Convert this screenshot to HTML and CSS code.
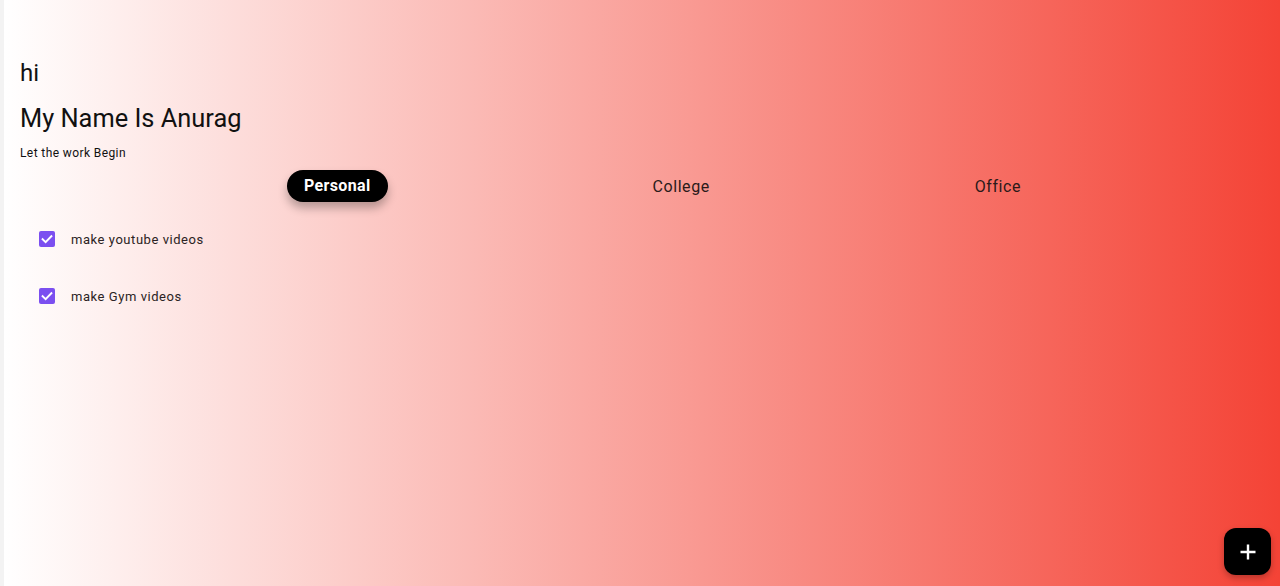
FILE: index.html
```html
<!DOCTYPE html>
<html>
<head>
<meta charset="utf-8">
<link rel="stylesheet" href="styles.css">
</head>
<body>
<div class="frame">
  <main class="screen">
    <header class="intro">
      <div class="hi">hi</div>
      <h1 class="name">My Name Is Anurag</h1>
      <p class="tagline">Let the work Begin</p>
    </header>
    <nav class="tabs">
      <span class="tab active">Personal</span>
      <span class="tab">College</span>
      <span class="tab">Office</span>
    </nav>
    <ul class="todos">
      <li class="todo">
        <span class="check"><svg viewBox="0 0 16 16" width="16" height="16"><path d="M3.6 8.2 L6.6 11.1 L12.4 5.2" fill="none" stroke="#fff" stroke-width="1.9" stroke-linecap="square"/></svg></span>
        <span class="label">make youtube videos</span>
      </li>
      <li class="todo">
        <span class="check"><svg viewBox="0 0 16 16" width="16" height="16"><path d="M3.6 8.2 L6.6 11.1 L12.4 5.2" fill="none" stroke="#fff" stroke-width="1.9" stroke-linecap="square"/></svg></span>
        <span class="label">make Gym videos</span>
      </li>
    </ul>
    <button class="fab" aria-label="add">
      <svg viewBox="0 0 24 24" width="24" height="24"><path d="M12 4.5v15M4.5 12h15" stroke="#fff" stroke-width="2.4" fill="none"/></svg>
    </button>
  </main>
</div>
</body>
</html>
```
FILE: styles.css
```css
html, body {
  margin: 0;
  padding: 0;
  height: 100%;
}
body {
  background: #f3f3f3;
  font-family: Roboto, "Noto Sans", sans-serif;
  overflow: hidden;
}
.frame {
  height: 586px;
  padding-left: 4px;
  display: flex;
}
.screen {
  position: relative;
  flex: 1;
  background: linear-gradient(to right, #ffffff 0%, #f44336 100%);
  display: flex;
  flex-direction: column;
  overflow: hidden;
}
.intro {
  padding: 58px 0 0 16px;
}
.hi {
  font-size: 24px;
  line-height: 30px;
  color: #111;
}
.name {
  margin: 14px 0 0 0;
  font-weight: 400;
  font-size: 25.4px;
  line-height: 32px;
  color: #111;
}
.tagline {
  margin: 11px 0 0 0;
  font-size: 12px;
  line-height: 16px;
  letter-spacing: 0.4px;
  color: #111;
}
.tabs {
  display: flex;
  justify-content: space-evenly;
  align-items: center;
  padding-left: 18px;
  margin-right: -6px;
  margin-top: 9px;
  height: 32px;
}
.tab {
  font-size: 16px;
  color: #2a1a1a;
  letter-spacing: 0.55px;
}
.tab.active {
  background: #000;
  color: #fff;
  font-weight: 700;
  letter-spacing: 0.35px;
  padding: 0 17px;
  height: 32px;
  line-height: 32px;
  border-radius: 16px;
  box-shadow: 0 6px 10px rgba(0,0,0,0.28);
}
.todos {
  list-style: none;
  margin: 29px 0 0 0;
  padding: 0 0 0 35px;
  display: flex;
  flex-direction: column;
  gap: 41px;
}
.todo {
  display: flex;
  align-items: center;
  height: 16px;
}
.check {
  width: 16px;
  height: 16px;
  border-radius: 2px;
  background: #7b4ff0;
  display: flex;
}
.label {
  margin-left: 16px;
  font-size: 13px;
  color: #2b2323;
  letter-spacing: 0.55px;
}
.fab {
  position: absolute;
  right: 9px;
  bottom: 11px;
  width: 47px;
  height: 47px;
  border: none;
  border-radius: 12px;
  background: #000;
  display: flex;
  align-items: center;
  justify-content: center;
  box-shadow: 0 3px 6px rgba(0,0,0,0.25);
  padding: 0;
}
```
